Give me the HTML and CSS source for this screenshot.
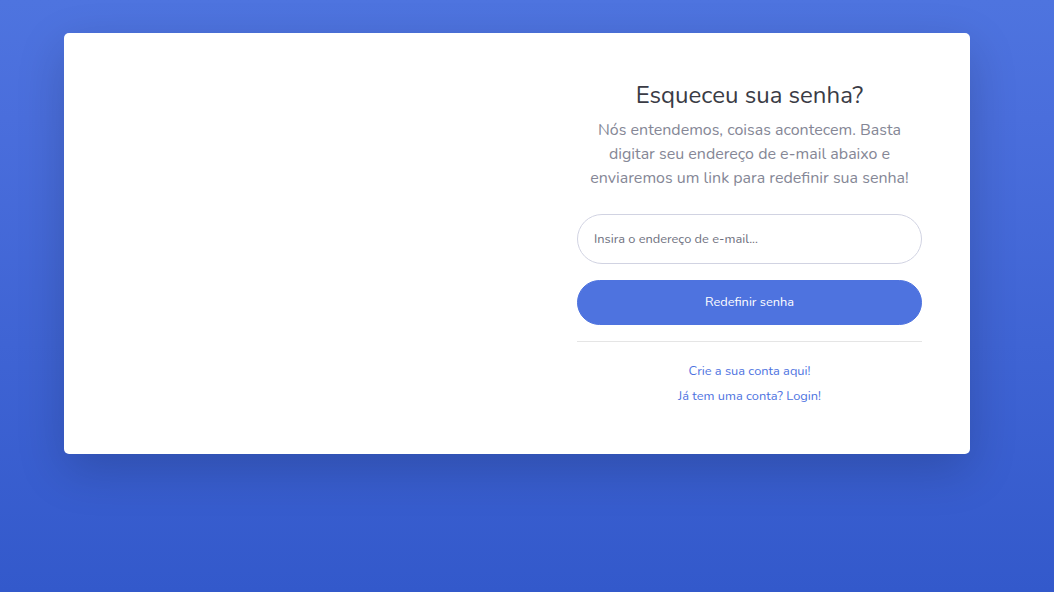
FILE: index.html
```html
<!DOCTYPE html>
<html lang="pt-BR">
<head>
<meta charset="utf-8">
<title>Esqueceu sua senha?</title>
<link rel="stylesheet" href="styles.css">
</head>
<body>
<div class="page">
  <div class="card">
    <div class="card-image"></div>
    <div class="card-main">
      <div class="intro">
        <h1 class="title">Esqueceu sua senha?</h1>
        <p class="lead">Nós entendemos, coisas acontecem. Basta digitar seu endereço de e-mail abaixo e enviaremos um link para redefinir sua senha!</p>
      </div>
      <form class="form">
        <input class="input" type="email" placeholder="Insira o endereço de e-mail...">
        <button class="btn" type="button">Redefinir senha</button>
      </form>
      <hr class="divider">
      <div class="links">
        <div class="link-row"><a class="link" href="#">Crie a sua conta aqui!</a></div>
        <div class="link-row"><a class="link" href="#">Já tem uma conta? Login!</a></div>
      </div>
    </div>
  </div>
</div>
</body>
</html>
```
FILE: styles.css
```css
* { box-sizing: border-box; }
html, body { margin: 0; padding: 0; }
body {
  font-family: Nunito, Lato, "Noto Sans", sans-serif;
  color: #858796;
  font-size: 16px;
  line-height: 1.5;
}
.page {
  min-height: 592px;
  height: 100vh;
  padding: 33px 0 0 64px;
  background: linear-gradient(180deg, #4e74df 0%, #4a6edc 20%, #3359cb 100%);
}
.card {
  width: 906px;
  height: 421px;
  background: #fff;
  border-radius: 5px;
  box-shadow: 0 16px 48px rgba(0, 0, 0, 0.175);
  display: grid;
  grid-template-columns: 453px 453px;
  overflow: hidden;
}
.card-main {
  padding: 48px 48px 48px 60px;
}
.intro { text-align: center; }
.title {
  margin: 0 0 8px;
  font-size: 24px;
  font-weight: 400;
  line-height: 1.2;
  color: #3a3b45;
}
.lead {
  margin: 0 0 24px;
  font-size: 16px;
  line-height: 24px;
  color: #858796;
}
.form {
  display: flex;
  flex-direction: column;
  gap: 16px;
  margin: 0;
}
.input {
  height: 50px;
  width: 100%;
  border: 1px solid #d1d3e2;
  border-radius: 160px;
  padding: 0 16px;
  font-family: inherit;
  font-size: 12.8px;
  color: #6e707e;
  outline: none;
}
.input::placeholder { color: #6e707e; }
.btn {
  height: 45px;
  width: 100%;
  border: 1px solid #4e73df;
  background: #4e73df;
  color: #fff;
  border-radius: 160px;
  font-family: inherit;
  font-size: 12.8px;
}
.divider {
  margin: 16px 0;
  border: 0;
  border-top: 1px solid rgba(0, 0, 0, 0.1);
}
.links { text-align: center; }
.link-row { line-height: 24px; }
.link {
  font-size: 12.8px;
  color: #4e73df;
  text-decoration: none;
}
```
